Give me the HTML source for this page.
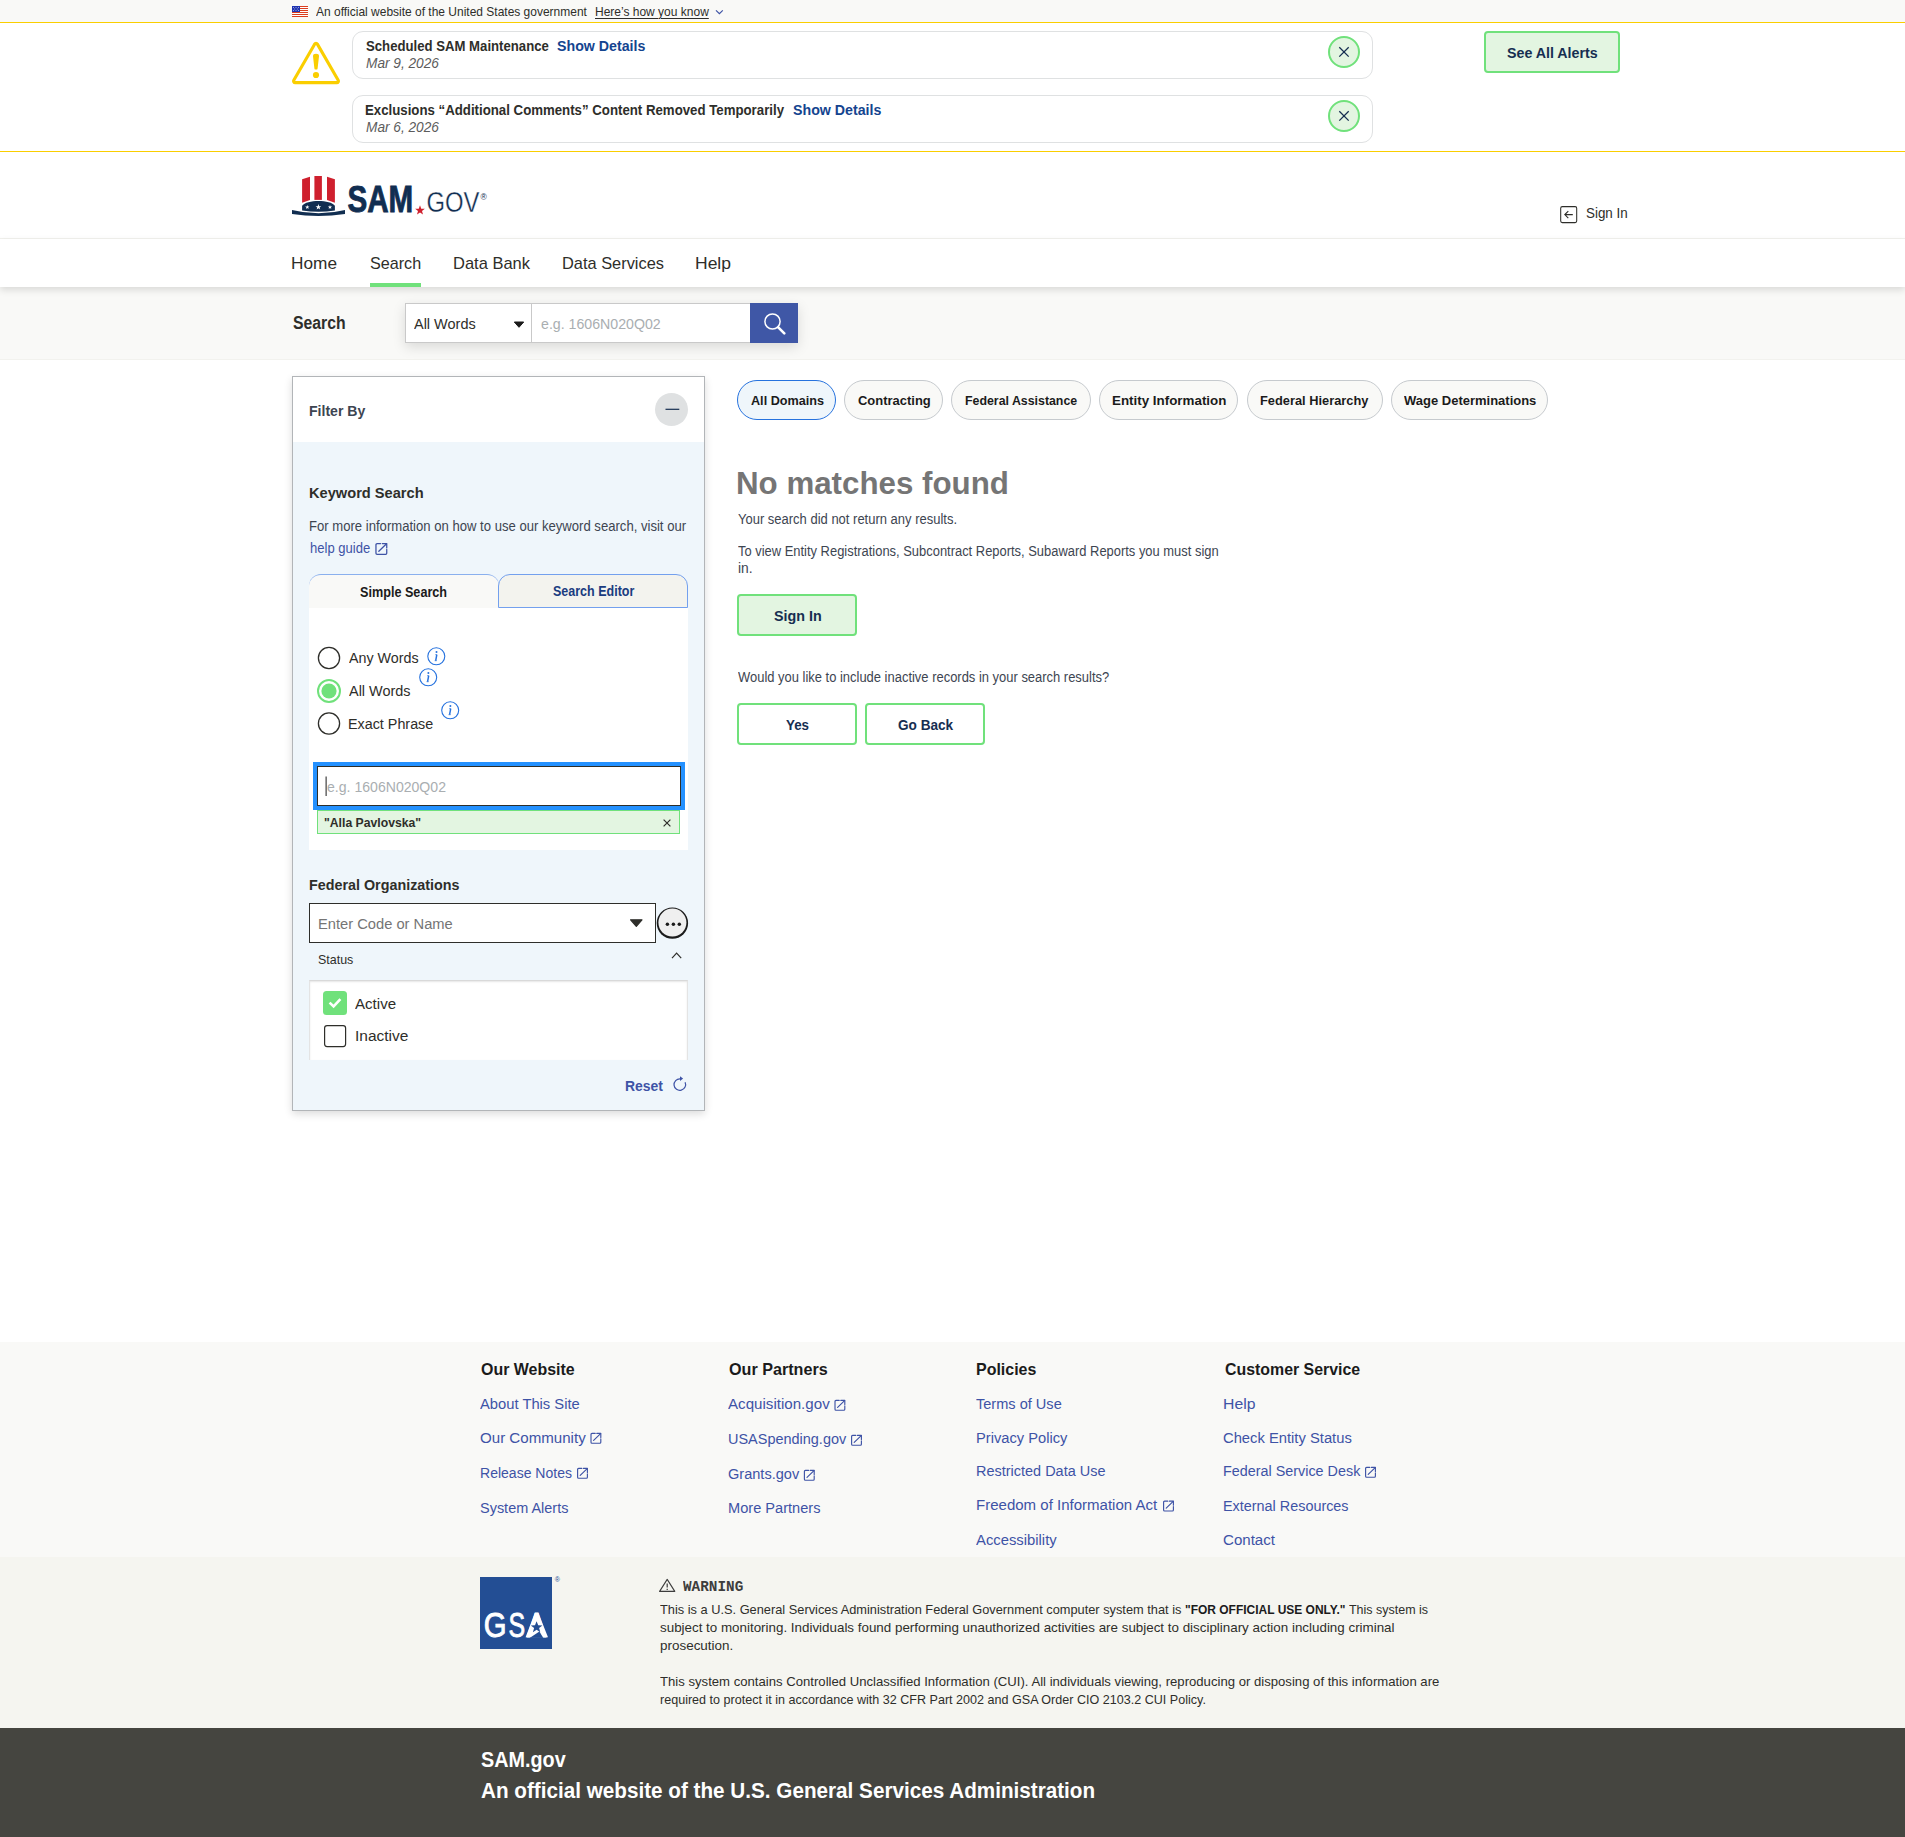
<!DOCTYPE html>
<html lang="en"><head><meta charset="utf-8"><title>SAM.gov | Search</title>
<style>
html,body{margin:0;padding:0;background:#fff}
body{width:1905px;height:1837px;position:relative;overflow:hidden;font-family:"Liberation Sans", sans-serif;}
.t{position:absolute;white-space:pre;line-height:20px;transform-origin:0 0;display:block;margin:0;padding:0;font-weight:400;text-decoration:none}
.b{position:absolute;box-sizing:border-box}
svg{position:absolute;overflow:visible}
</style></head><body>
<!-- backgrounds -->
<div class="b" style="left:0;top:0;width:1905px;height:22px;background:#f9f9f7"></div>
<div class="b" style="left:0;top:22px;width:1905px;height:1px;background:#face00"></div>
<div class="b" style="left:0;top:151px;width:1905px;height:1px;background:#face00"></div>
<div class="b" style="left:0;top:238px;width:1905px;height:1px;background:#f2f2ee"></div>
<div class="b" style="left:0;top:287px;width:1905px;height:73px;background:#f9f9f7;border-bottom:1px solid #f2f2ee"></div>
<div class="b" style="left:0;top:239px;width:1905px;height:48px;background:#fff;box-shadow:0 3px 7px rgba(0,0,0,.13)"></div>
<div class="b" style="left:0;top:1342px;width:1905px;height:215px;background:#f9f9f7"></div>
<div class="b" style="left:0;top:1557px;width:1905px;height:171px;background:#f5f5f0"></div>
<div class="b" style="left:0;top:1728px;width:1905px;height:109px;background:#454540"></div>

<!-- alerts -->
<div class="b" style="left:352px;top:31px;width:1021px;height:48px;border:1px solid #dfe1e2;border-radius:11px;background:#fff"></div>
<div class="b" style="left:352px;top:95px;width:1021px;height:48px;border:1px solid #dfe1e2;border-radius:11px;background:#fff"></div>
<div class="b" style="left:1328px;top:36px;width:32px;height:32px;border:2px solid #70e17b;border-radius:50%;background:#e3f5e1"></div>
<div class="b" style="left:1328px;top:100px;width:32px;height:32px;border:2px solid #70e17b;border-radius:50%;background:#e3f5e1"></div>
<div class="b" style="left:1484px;top:31px;width:136px;height:42px;border:2px solid #70e17b;border-radius:4px;background:#e3f5e1"></div>

<!-- search group -->
<div class="b" style="left:405px;top:303px;width:393px;height:40px;box-shadow:0 4px 12px rgba(0,0,0,.13);background:#fff"></div>
<div class="b" style="left:405px;top:303px;width:127px;height:40px;border:1px solid #c9c9c9;background:#fff"></div>
<div class="b" style="left:531px;top:303px;width:220px;height:40px;border:1px solid #c9c9c9;background:#fff"></div>
<div class="b" style="left:750px;top:303px;width:48px;height:40px;background:#3f57a6"></div>

<!-- filter panel -->
<div class="b" style="left:292px;top:376px;width:413px;height:735px;border:1px solid #b2b5b8;background:#eff6fb;box-shadow:0 3px 8px rgba(0,0,0,.14)"></div>
<div class="b" style="left:293px;top:377px;width:411px;height:65px;background:#fff"></div>
<div class="b" style="left:309px;top:608px;width:379px;height:242px;background:#fff"></div>
<div class="b" style="left:309px;top:574px;width:190px;height:34px;background:#f9f9f7;border-top:1px solid #8ab0ee;border-radius:12px 12px 0 0"></div>
<div class="b" style="left:498px;top:574px;width:190px;height:34px;background:#f3f3ee;border:1px solid #73a0ee;border-radius:12px 12px 0 0"></div>
<div class="b" style="left:317px;top:766px;width:363.5px;height:40px;border:1px solid #2e2e2a;background:#fff;outline:4px solid #2491ff;outline-offset:0"></div>
<div class="b" style="left:317px;top:810px;width:363px;height:24px;border:1px solid #70e17b;background:#e3f5e1"></div>
<div class="b" style="left:309px;top:903px;width:347px;height:39.5px;border:1px solid #2e2e2a;background:#fff"></div>
<div class="b" style="left:309px;top:979.5px;width:379px;height:80px;border:1px solid #e4e4e4;border-top-color:#d9d9d9;border-bottom:none;background:#fff;box-shadow:inset 0 1px 2px rgba(0,0,0,.10)"></div>

<!-- pills -->
<div class="b" style="left:737px;top:380px;width:99px;height:40px;border:1px solid #2672de;border-radius:20px;background:#eff6fb"></div>
<div class="b" style="left:844.25px;top:380px;width:98.75px;height:40px;border:1px solid #c6cace;border-radius:20px;background:#f9f9f7"></div>
<div class="b" style="left:951.25px;top:380px;width:139.5px;height:40px;border:1px solid #c6cace;border-radius:20px;background:#f9f9f7"></div>
<div class="b" style="left:1099.2px;top:380px;width:139.1px;height:40px;border:1px solid #c6cace;border-radius:20px;background:#f9f9f7"></div>
<div class="b" style="left:1247.3px;top:380px;width:135.5px;height:40px;border:1px solid #c6cace;border-radius:20px;background:#f9f9f7"></div>
<div class="b" style="left:1391.3px;top:380px;width:157.1px;height:40px;border:1px solid #c6cace;border-radius:20px;background:#f9f9f7"></div>

<!-- buttons -->
<div class="b" style="left:737px;top:594px;width:120px;height:41.5px;border:2px solid #70e17b;border-radius:4px;background:#e3f5e1"></div>
<div class="b" style="left:737px;top:703px;width:120px;height:41.5px;border:2px solid #70e17b;border-radius:4px;background:#fff"></div>
<div class="b" style="left:865.25px;top:703px;width:120px;height:41.5px;border:2px solid #70e17b;border-radius:4px;background:#fff"></div>

<!-- GSA -->
<div class="b" style="left:480px;top:1577px;width:72px;height:72px;background:#234e94"></div>

<svg width="1905" height="1837" viewBox="0 0 1905 1837" style="left:0;top:0;pointer-events:none">
<defs>
<g id="ext" fill="none" stroke="#3e53a6" stroke-width="1.15" stroke-linecap="round" stroke-linejoin="round">
<path d="M4.8,0.6H1.6a1,1 0 0 0 -1,1V9.4a1,1 0 0 0 1,1H9.4a1,1 0 0 0 1,-1V6"/><path d="M6.4,0.6H10.4V4.6"/><path d="M10.2,0.8L3.2,7.6"/>
</g>
<g id="info" fill="none" stroke="#2672de">
<circle cx="0" cy="0" r="8.5" stroke-width="1.1"/>
<path d="M0.5,-1.6L-0.6,4.3" stroke-width="1.5"/><path d="M-1,-1.6H0.6M-1.6,4.4H0.4" stroke-width="0.8"/>
<circle cx="0.2" cy="-4.2" r="1" fill="#2672de" stroke="none"/>
</g>
</defs>
<!-- flag -->
<g>
<rect x="292" y="6" width="16" height="11" fill="#fff"/>
<g fill="#db3e1f"><rect x="292" y="6" width="16" height="1"/><rect x="292" y="8" width="16" height="1"/><rect x="292" y="10" width="16" height="1"/><rect x="292" y="12" width="16" height="1"/><rect x="292" y="14" width="16" height="1"/><rect x="292" y="16" width="16" height="1"/></g>
<rect x="292" y="6" width="8" height="6" fill="#1e33b1"/><g fill="#fff" opacity=".85"><rect x="293" y="7" width=".8" height=".8"/><rect x="295.6" y="7" width=".8" height=".8"/><rect x="298.2" y="7" width=".8" height=".8"/><rect x="294.3" y="8.6" width=".8" height=".8"/><rect x="296.9" y="8.6" width=".8" height=".8"/><rect x="293" y="10.2" width=".8" height=".8"/><rect x="295.6" y="10.2" width=".8" height=".8"/><rect x="298.2" y="10.2" width=".8" height=".8"/></g>
</g>
<!-- banner chevron -->
<path d="M716,10.3l3.4,3.4l3.4,-3.4" fill="none" stroke="#3e53a6" stroke-width="1.2"/>
<!-- alert triangle -->
<path d="M314.62,44.15A1.6,1.6 0 0 1 317.38,44.15L338.22,80.25A1.6,1.6 0 0 1 336.83,82.65L295.17,82.65A1.6,1.6 0 0 1 293.78,80.25Z" fill="none" stroke="#face00" stroke-width="3.1" stroke-linejoin="round"/>
<path d="M313,56.2a3,2.4 0 0 1 6,0L317.6,68.4a1.6,1.2 0 0 1 -3.2,0Z" fill="#face00"/>
<circle cx="316" cy="75" r="3.1" fill="#face00"/>
<!-- alert close x -->
<g stroke="#162e51" stroke-width="1.3"><path d="M1339.3,47.2l9.4,9.4M1348.7,47.2l-9.4,9.4"/><path d="M1339.3,111.2l9.4,9.4M1348.7,111.2l-9.4,9.4"/></g>
<!-- logo hat -->
<g>
<path d="M302.1,179.2L310,176.7V200L302.1,202.7Z" fill="#cf202e"/>
<path d="M314.4,176H321.9V199.9H314.4Z" fill="#cf202e"/>
<path d="M327,176.7L334.9,179.2V202.7L327,200Z" fill="#cf202e"/>
<path d="M302.1,205.8C306.5,199.4 330.5,199.4 334.9,205.8V210.6Q318.5,213 302.1,210.6Z" fill="#112e51"/>
<path d="M292,210Q318.5,216.6 345,210V214Q318.5,218.2 292,214Z" fill="#112e51"/>
<path d="M307.30,204.90L307.84,206.46L309.49,206.49L308.17,207.48L308.65,209.06L307.30,208.12L305.95,209.06L306.43,207.48L305.11,206.49L306.76,206.46Z" fill="#fff"/><path d="M318.40,204.10L319.11,206.13L321.25,206.17L319.54,207.47L320.16,209.53L318.40,208.30L316.64,209.53L317.26,207.47L315.55,206.17L317.69,206.13Z" fill="#fff"/><path d="M330.00,204.90L330.54,206.46L332.19,206.49L330.87,207.48L331.35,209.06L330.00,208.12L328.65,209.06L329.13,207.48L327.81,206.49L329.46,206.46Z" fill="#fff"/>
<text x="347.4" y="212.1" font-family='"Liberation Sans", sans-serif' font-weight="700" font-size="37.8" fill="#112e51" stroke="#112e51" stroke-width="0.9" textLength="65.8" lengthAdjust="spacingAndGlyphs">SAM</text>
<path d="M420,205.3l1.24,3.4l3.62,0.12l-2.86,2.22l1.02,3.48l-3.02,-2.04l-3.02,2.04l1.02,-3.48l-2.86,-2.22l3.62,-0.12z" fill="#cf202e"/>
<text x="426.4" y="212.1" font-family='"Liberation Sans", sans-serif' font-weight="400" font-size="30.4" fill="#112e51" stroke="#fff" stroke-width="0.35" textLength="53" lengthAdjust="spacingAndGlyphs">GOV</text>
<text x="480.6" y="199.6" font-family='"Liberation Sans", sans-serif' font-size="8.5" fill="#112e51">®</text>
</g>
<!-- sign in icon -->
<rect x="1560.7" y="206.6" width="16" height="16" rx="1.6" fill="none" stroke="#2e2e2a" stroke-width="1.05"/>
<path d="M1572.8,214.6H1565M1568.3,211.1L1564.8,214.6L1568.3,218.1" fill="none" stroke="#2e2e2a" stroke-width="1.1"/>
<!-- nav underline -->
<rect x="370" y="283" width="51" height="4" fill="#70e17b"/>
<!-- select arrow -->
<path d="M514.3,322h9.4l-4.7,5.3z" fill="#1b1b1b" stroke="#1b1b1b" stroke-width="1" stroke-linejoin="round"/>
<!-- magnifier -->
<circle cx="772.5" cy="321.5" r="7.6" fill="none" stroke="#fff" stroke-width="1.5"/>
<path d="M778.3,327.3L784.3,333.3" stroke="#fff" stroke-width="2.6" stroke-linecap="round"/>
<!-- filter collapse button -->
<circle cx="671.5" cy="409.5" r="16.5" fill="#dfe1e2"/>
<path d="M665.5,409.3H679.3" stroke="#162e51" stroke-width="1.2"/>
<!-- help guide ext icon -->
<use href="#ext" transform="translate(375.3,542.9) scale(1.1)"/>
<!-- radios -->
<circle cx="329" cy="658" r="10.6" fill="#fff" stroke="#2e2e2a" stroke-width="1.3"/>
<circle cx="329" cy="691" r="11" fill="#fff" stroke="#70e17b" stroke-width="2"/>
<circle cx="329" cy="691" r="7.6" fill="#70e17b"/>
<circle cx="329" cy="723.5" r="10.6" fill="#fff" stroke="#2e2e2a" stroke-width="1.3"/>
<use href="#info" x="436.3" y="656.3"/>
<use href="#info" x="428.2" y="677.3"/>
<use href="#info" x="450.2" y="710.3"/>
<!-- caret -->
<rect x="325.6" y="776.5" width="1" height="19.5" fill="#1b1b1b"/>
<!-- chip x -->
<path d="M663.6,819.6l6.8,6.8M670.4,819.6l-6.8,6.8" stroke="#2e2e2a" stroke-width="1.2"/>
<!-- fed org arrow and dots -->
<path d="M630.6,919.8h11.4l-5.7,6.6z" fill="#2e2e2a" stroke="#2e2e2a" stroke-width="1.2" stroke-linejoin="round"/>
<circle cx="672.4" cy="923.1" r="15.7" fill="#1b1b1b"/>
<circle cx="672.4" cy="922.6" r="14" fill="#efefef"/>
<circle cx="667.4" cy="924.2" r="1.75" fill="#1b1b1b"/><circle cx="673.4" cy="924.2" r="1.75" fill="#1b1b1b"/><circle cx="679.3" cy="924.2" r="1.75" fill="#1b1b1b"/>
<!-- status chevron -->
<path d="M672,958.2L676.6,953.2L681.2,958.2" fill="none" stroke="#2e2e2a" stroke-width="1.2"/>
<!-- checkboxes -->
<rect x="323" y="991" width="24" height="24" rx="3.5" fill="#70e17b"/>
<path d="M329.6,1002.6L333.6,1006.4L340.4,999.2" fill="none" stroke="#fff" stroke-width="2.6"/>
<rect x="324.6" y="1025.6" width="21" height="21" rx="2.5" fill="#fff" stroke="#2e2e2a" stroke-width="1.2"/>
<!-- reset icon -->
<path d="M680.2,1078.8A5.8,5.8 0 1 0 685.1,1082.2" fill="none" stroke="#3e53a6" stroke-width="1.2"/>
<path d="M680,1076.2V1081.1L683.1,1078.6Z" fill="#3e53a6"/>
<!-- footer ext icons -->
<use href="#ext" x="590.4" y="1432.8"/>
<use href="#ext" x="577" y="1467.8"/>
<use href="#ext" x="834.4" y="1399.8"/>
<use href="#ext" x="851" y="1434.8"/>
<use href="#ext" x="803.8" y="1469.8"/>
<use href="#ext" x="1163" y="1500.6"/>
<use href="#ext" x="1365" y="1466.8"/>
<!-- GSA -->
<text y="1637" font-family='"Liberation Sans", sans-serif' font-weight="400" font-size="34.7" fill="#fff" stroke="#fff" stroke-width="0.9"><tspan x="483.8" textLength="22.8" lengthAdjust="spacingAndGlyphs">G</tspan><tspan x="508.6" textLength="16.6" lengthAdjust="spacingAndGlyphs">S</tspan><tspan x="527" textLength="19" lengthAdjust="spacingAndGlyphs">A</tspan></text>
<path d="M525.6,1637.2L534.9,1613H538.3L548,1637.2Z" fill="#fff"/>
<path d="M536.6,1621.2l1.6,4.1l4.2,0.2l-3.3,2.6l1.2,4.1l-3.7,-2.4l-3.7,2.4l1.2,-4.1l-3.3,-2.6l4.2,-0.2z" fill="#234e94"/>
<path d="M530,1637.8L539.4,1631.4L543.2,1637.8Z" fill="#234e94"/>
<text x="554.8" y="1582.2" font-family='"Liberation Sans", sans-serif' font-size="7" fill="#234e94">®</text>
<!-- warning icon -->
<path d="M667.2,1579.4L674.8,1591.4H659.6Z" fill="none" stroke="#3d3d3d" stroke-width="1.1" stroke-linejoin="round"/>
<path d="M667.2,1583.4V1587.6M667.2,1588.8V1590" stroke="#3d3d3d" stroke-width="1.2"/>
</svg>

<header>
<span class="t" style='left:316.00px;top:2.00px;font-size:12.2px;color:#2e2e2a;transform:scaleX(0.9833);'>An official website of the United States government</span>
<a class="t" style='left:595.02px;top:2.00px;font-size:12.2px;color:#2e2e2a;transform:scaleX(0.9842);text-decoration:underline;text-decoration-thickness:1px;text-underline-offset:1.5px;'>Here’s how you know</a>
<span class="t" style='left:365.50px;top:35.50px;font-size:15px;color:#2e2e2a;transform:scaleX(0.8773);font-weight:700;'>Scheduled SAM Maintenance</span>
<a class="t" style='left:556.50px;top:35.50px;font-size:15px;color:#14448f;transform:scaleX(0.9461);font-weight:700;'>Show Details</a>
<span class="t" style='left:365.50px;top:53.25px;font-size:15px;color:#5c5c5c;transform:scaleX(0.9107);font-style:italic;'>Mar 9, 2026</span>
<span class="t" style='left:364.62px;top:99.50px;font-size:15px;color:#2e2e2a;transform:scaleX(0.8825);font-weight:700;'>Exclusions “Additional Comments” Content Removed Temporarily</span>
<a class="t" style='left:792.50px;top:99.50px;font-size:15px;color:#14448f;transform:scaleX(0.9461);font-weight:700;'>Show Details</a>
<span class="t" style='left:365.50px;top:117.25px;font-size:15px;color:#5c5c5c;transform:scaleX(0.9107);font-style:italic;'>Mar 6, 2026</span>
<a class="t" style='left:1506.60px;top:42.60px;font-size:15px;color:#162e51;transform:scaleX(0.9485);font-weight:700;'>See All Alerts</a>
<a class="t" style='left:1586.00px;top:202.50px;font-size:15.3px;color:#2e2e2a;transform:scaleX(0.8744);'>Sign In</a>
</header>
<nav>
<a class="t" style='left:291.49px;top:253.75px;font-size:17px;color:#2e2e2a;transform:scaleX(1.0138);'>Home</a>
<a class="t" style='left:370.00px;top:253.75px;font-size:17px;color:#2e2e2a;transform:scaleX(0.9502);'>Search</a>
<a class="t" style='left:452.53px;top:253.75px;font-size:17px;color:#2e2e2a;transform:scaleX(0.9698);'>Data Bank</a>
<a class="t" style='left:562.04px;top:253.75px;font-size:17px;color:#2e2e2a;transform:scaleX(0.9634);'>Data Services</a>
<a class="t" style='left:694.97px;top:253.75px;font-size:17px;color:#2e2e2a;transform:scaleX(1.0296);'>Help</a>
</nav>
<section>
<label class="t" style='left:292.50px;top:313.00px;font-size:17.5px;color:#2e2e2a;transform:scaleX(0.9015);font-weight:700;'>Search</label>
<span class="t" style='left:414.00px;top:313.50px;font-size:15.3px;color:#2e2e2a;transform:scaleX(0.9463);'>All Words</span>
<span class="t" style='left:540.50px;top:313.50px;font-size:15.3px;color:#a9aeb1;transform:scaleX(0.9261);'>e.g. 1606N020Q02</span>
</section>
<aside>
<h2 class="t" style='left:308.56px;top:400.75px;font-size:15px;color:#3d4551;transform:scaleX(0.9385);font-weight:700;'>Filter By</h2>
<h3 class="t" style='left:308.52px;top:482.75px;font-size:15px;color:#2e2e2a;transform:scaleX(0.9752);font-weight:700;'>Keyword Search</h3>
<span class="t" style='left:308.55px;top:516.75px;font-size:13.8px;color:#3d4551;transform:scaleX(0.9493);'>For more information on how to use our keyword search, visit our</span>
<a class="t" style='left:309.50px;top:538.75px;font-size:13.8px;color:#3e53a6;transform:scaleX(0.9453);'>help guide</a>
<span class="t" style='left:360.00px;top:582.00px;font-size:14.2px;color:#1b1b1b;transform:scaleX(0.8907);font-weight:700;'>Simple Search</span>
<span class="t" style='left:552.50px;top:581.25px;font-size:14.2px;color:#1a3c80;transform:scaleX(0.8816);font-weight:700;'>Search Editor</span>
<label class="t" style='left:349.25px;top:647.50px;font-size:15.5px;color:#2e2e2a;transform:scaleX(0.9206);'>Any Words</label>
<label class="t" style='left:349.25px;top:680.50px;font-size:15.5px;color:#2e2e2a;transform:scaleX(0.9316);'>All Words</label>
<label class="t" style='left:348.33px;top:713.75px;font-size:15.5px;color:#2e2e2a;transform:scaleX(0.9248);'>Exact Phrase</label>
<span class="t" style='left:327.00px;top:777.00px;font-size:15.3px;color:#a9aeb1;transform:scaleX(0.9203);'>e.g. 1606N020Q02</span>
<span class="t" style='left:323.75px;top:812.50px;font-size:13.5px;color:#2e2e2a;transform:scaleX(0.9045);font-weight:700;'>&quot;Alla Pavlovska&quot;</span>
<h3 class="t" style='left:308.54px;top:874.75px;font-size:15px;color:#2e2e2a;transform:scaleX(0.9555);font-weight:700;'>Federal Organizations</h3>
<span class="t" style='left:317.55px;top:913.50px;font-size:15.5px;color:#757575;transform:scaleX(0.9482);'>Enter Code or Name</span>
<span class="t" style='left:317.50px;top:949.50px;font-size:13.5px;color:#2e2e2a;transform:scaleX(0.9216);'>Status</span>
<label class="t" style='left:355.00px;top:993.50px;font-size:15.5px;color:#2e2e2a;transform:scaleX(0.9738);'>Active</label>
<label class="t" style='left:354.75px;top:1025.50px;font-size:15.5px;color:#2e2e2a;transform:scaleX(0.9991);'>Inactive</label>
<a class="t" style='left:624.57px;top:1075.75px;font-size:15px;color:#3e53a6;transform:scaleX(0.9283);font-weight:700;'>Reset</a>
</aside>
<main>
<a class="t" style='left:750.50px;top:390.50px;font-size:13.6px;color:#1b1b1b;transform:scaleX(0.9295);font-weight:700;'>All Domains</a>
<a class="t" style='left:857.50px;top:390.50px;font-size:13.6px;color:#1b1b1b;transform:scaleX(0.9543);font-weight:700;'>Contracting</a>
<a class="t" style='left:964.50px;top:390.50px;font-size:13.6px;color:#1b1b1b;transform:scaleX(0.9087);font-weight:700;'>Federal Assistance</a>
<a class="t" style='left:1111.90px;top:390.50px;font-size:13.6px;color:#1b1b1b;transform:scaleX(0.9837);font-weight:700;'>Entity Information</a>
<a class="t" style='left:1260.40px;top:390.50px;font-size:13.6px;color:#1b1b1b;transform:scaleX(0.9437);font-weight:700;'>Federal Hierarchy</a>
<a class="t" style='left:1403.50px;top:390.50px;font-size:13.6px;color:#1b1b1b;transform:scaleX(0.9556);font-weight:700;'>Wage Determinations</a>
<h1 class="t" style='left:736.47px;top:473.75px;font-size:30.8px;color:#757575;transform:scaleX(1.0158);font-weight:700;'>No matches found</h1>
<p class="t" style='left:737.50px;top:509.75px;font-size:13.8px;color:#3d4551;transform:scaleX(0.9415);'>Your search did not return any results.</p>
<p class="t" style='left:737.50px;top:541.75px;font-size:13.8px;color:#3d4551;transform:scaleX(0.9369);'>To view Entity Registrations, Subcontract Reports, Subaward Reports you must sign</p>
<p class="t" style='left:737.50px;top:559.25px;font-size:13.8px;color:#3d4551;transform:scaleX(1.0008);'>in.</p>
<a class="t" style='left:773.75px;top:605.50px;font-size:15px;color:#162e51;transform:scaleX(0.9532);font-weight:700;'>Sign In</a>
<p class="t" style='left:737.50px;top:667.50px;font-size:13.8px;color:#3d4551;transform:scaleX(0.9387);'>Would you like to include inactive records in your search results?</p>
<a class="t" style='left:786.00px;top:714.50px;font-size:15px;color:#162e51;transform:scaleX(0.8915);font-weight:700;'>Yes</a>
<a class="t" style='left:897.50px;top:714.50px;font-size:15px;color:#162e51;transform:scaleX(0.9063);font-weight:700;'>Go Back</a>
</main>
<footer>
<h4 class="t" style='left:480.50px;top:1359.50px;font-size:17px;color:#1b1b1b;transform:scaleX(0.9385);font-weight:700;'>Our Website</h4>
<h4 class="t" style='left:728.50px;top:1359.50px;font-size:17px;color:#1b1b1b;transform:scaleX(0.9495);font-weight:700;'>Our Partners</h4>
<h4 class="t" style='left:975.56px;top:1359.50px;font-size:17px;color:#1b1b1b;transform:scaleX(0.9395);font-weight:700;'>Policies</h4>
<h4 class="t" style='left:1224.50px;top:1359.50px;font-size:17px;color:#1b1b1b;transform:scaleX(0.9350);font-weight:700;'>Customer Service</h4>
<a class="t" style='left:480.40px;top:1393.50px;font-size:15.2px;color:#3e53a6;transform:scaleX(0.9713);'>About This Site</a>
<a class="t" style='left:480.40px;top:1427.50px;font-size:15.2px;color:#3e53a6;transform:scaleX(0.9940);'>Our Community</a>
<a class="t" style='left:480.40px;top:1462.50px;font-size:15.2px;color:#3e53a6;transform:scaleX(0.9233);'>Release Notes</a>
<a class="t" style='left:480.40px;top:1497.50px;font-size:15.2px;color:#3e53a6;transform:scaleX(0.9524);'>System Alerts</a>
<a class="t" style='left:728.40px;top:1393.50px;font-size:15.2px;color:#3e53a6;transform:scaleX(0.9955);'>Acquisition.gov</a>
<a class="t" style='left:728.40px;top:1428.50px;font-size:15.2px;color:#3e53a6;transform:scaleX(0.9524);'>USASpending.gov</a>
<a class="t" style='left:728.40px;top:1463.50px;font-size:15.2px;color:#3e53a6;transform:scaleX(0.9586);'>Grants.gov</a>
<a class="t" style='left:728.40px;top:1498.25px;font-size:15.2px;color:#3e53a6;transform:scaleX(0.9609);'>More Partners</a>
<a class="t" style='left:976.20px;top:1393.50px;font-size:15.2px;color:#3e53a6;transform:scaleX(0.9583);'>Terms of Use</a>
<a class="t" style='left:976.20px;top:1427.50px;font-size:15.2px;color:#3e53a6;transform:scaleX(0.9671);'>Privacy Policy</a>
<a class="t" style='left:976.20px;top:1460.50px;font-size:15.2px;color:#3e53a6;transform:scaleX(0.9528);'>Restricted Data Use</a>
<a class="t" style='left:976.20px;top:1494.50px;font-size:15.2px;color:#3e53a6;transform:scaleX(0.9892);'>Freedom of Information Act</a>
<a class="t" style='left:976.20px;top:1529.50px;font-size:15.2px;color:#3e53a6;transform:scaleX(0.9752);'>Accessibility</a>
<a class="t" style='left:1223.30px;top:1393.50px;font-size:15.2px;color:#3e53a6;transform:scaleX(1.0377);'>Help</a>
<a class="t" style='left:1223.30px;top:1427.50px;font-size:15.2px;color:#3e53a6;transform:scaleX(0.9719);'>Check Entity Status</a>
<a class="t" style='left:1223.30px;top:1460.50px;font-size:15.2px;color:#3e53a6;transform:scaleX(0.9458);'>Federal Service Desk</a>
<a class="t" style='left:1223.30px;top:1495.50px;font-size:15.2px;color:#3e53a6;transform:scaleX(0.9475);'>External Resources</a>
<a class="t" style='left:1223.30px;top:1529.50px;font-size:15.2px;color:#3e53a6;transform:scaleX(0.9921);'>Contact</a>
<p class="t" style='left:683.25px;top:1577.25px;font-size:14.2px;color:#3d3d3d;transform:scaleX(1.0113);font-weight:700;font-family:"Liberation Mono", monospace;'>WARNING</p>
<p class="t" style='left:659.50px;top:1599.50px;font-size:13.6px;color:#2e2e2a;transform:scaleX(0.9415);'>This is a U.S. General Services Administration Federal Government computer system that is</p>
<p class="t" style='left:1185.20px;top:1599.50px;font-size:13.6px;color:#1b1b1b;transform:scaleX(0.8814);font-weight:700;'>&quot;FOR OFFICIAL USE ONLY.&quot;</p>
<p class="t" style='left:1349.30px;top:1599.50px;font-size:13.6px;color:#2e2e2a;transform:scaleX(0.9177);'>This system is</p>
<p class="t" style='left:659.50px;top:1617.50px;font-size:13.6px;color:#2e2e2a;transform:scaleX(0.9839);'>subject to monitoring. Individuals found performing unauthorized activities are subject to disciplinary action including criminal</p>
<p class="t" style='left:659.50px;top:1635.50px;font-size:13.6px;color:#2e2e2a;transform:scaleX(0.9894);'>prosecution.</p>
<p class="t" style='left:659.50px;top:1671.50px;font-size:13.6px;color:#2e2e2a;transform:scaleX(0.9658);'>This system contains Controlled Unclassified Information (CUI). All individuals viewing, reproducing or disposing of this information are</p>
<p class="t" style='left:659.50px;top:1689.50px;font-size:13.6px;color:#2e2e2a;transform:scaleX(0.9243);'>required to protect it in accordance with 32 CFR Part 2002 and GSA Order CIO 2103.2 CUI Policy.</p>
<p class="t" style='left:480.50px;top:1750.00px;font-size:21.5px;color:#ffffff;transform:scaleX(0.9210);font-weight:700;'>SAM.gov</p>
<p class="t" style='left:480.50px;top:1780.50px;font-size:21.5px;color:#ffffff;transform:scaleX(0.9620);font-weight:700;'>An official website of the U.S. General Services Administration</p>
</footer>
</body></html>
